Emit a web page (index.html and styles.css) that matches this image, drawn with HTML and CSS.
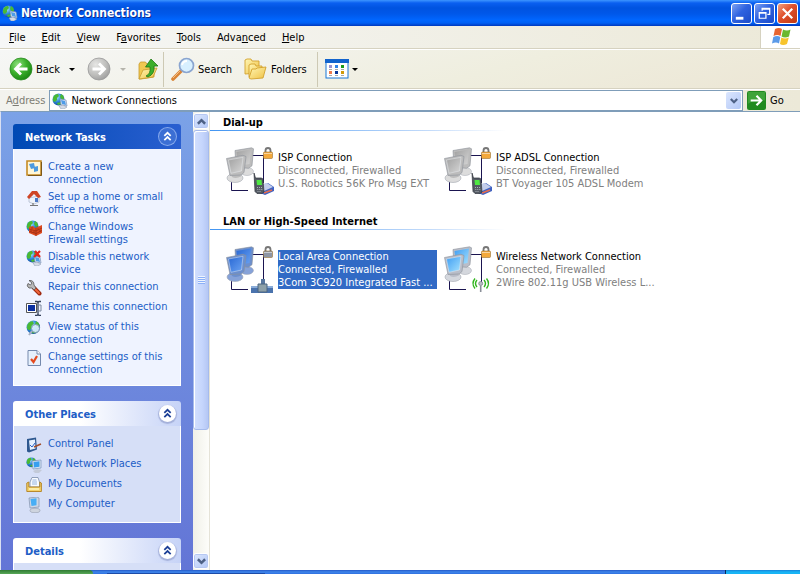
FILE: index.html
```html
<!DOCTYPE html>
<html lang="en">
<head>
<meta charset="utf-8">
<title>Network Connections</title>
<link rel="stylesheet" href="styles.css">
</head>
<body>
<svg class="defs" aria-hidden="true">
  <defs>
    <radialGradient id="globe" cx=".35" cy=".3" r=".8"><stop offset="0" stop-color="#a9e4ff"/><stop offset=".5" stop-color="#2b86d8"/><stop offset="1" stop-color="#0b3a8c"/></radialGradient>
    <radialGradient id="green" cx=".35" cy=".3" r=".8"><stop offset="0" stop-color="#8fe07e"/><stop offset=".5" stop-color="#3bb02c"/><stop offset="1" stop-color="#15800f"/></radialGradient>
    <radialGradient id="grey" cx=".35" cy=".3" r=".8"><stop offset="0" stop-color="#e6e6e4"/><stop offset=".6" stop-color="#bdbdbb"/><stop offset="1" stop-color="#999"/></radialGradient>
    <linearGradient id="folder" x2="1" y2="1"><stop offset="0" stop-color="#fff6b4"/><stop offset="1" stop-color="#efc143"/></linearGradient>
    <linearGradient id="scrOff" x2="1" y2="1"><stop offset="0" stop-color="#a0a0a0"/><stop offset="1" stop-color="#d6d6d6"/></linearGradient>
    <linearGradient id="scrOn" x2="1" y2="1"><stop offset="0" stop-color="#3f9df2"/><stop offset="1" stop-color="#a5e2ff"/></linearGradient>
    <linearGradient id="scrSel" x2="1" y2="1"><stop offset="0" stop-color="#2767d4"/><stop offset="1" stop-color="#6ba3f2"/></linearGradient>
    <symbol id="i-globe" viewBox="0 0 16 16">
      <circle cx="6.500" cy="6.500" r="6" fill="url(#globe)"/>
      <path d="M1 5Q2 1 6 1L7 3 5 5 5 7 3 9 1 8zM9 1Q12 2 12 6L10 7 8 4zM5 10l4-1 1 2-4 1z" fill="#49b934"/>
    </symbol>
    <symbol id="i-net" viewBox="0 0 16 16">
      <use href="#i-globe" width="16" height="16"/>
      <path d="M8 6l6 1 1 6-6-1z" fill="#dfe8f5" stroke="#7a92b8" stroke-width=".7"/>
      <path d="M9 7l4 1 1 4-4-1z" fill="#4e9be8"/>
      <path d="M7 13l4-1 4 2-3 2H9z" fill="#d5dbe6" stroke="#8391ab" stroke-width=".5"/>
    </symbol>
    <symbol id="i-lock" viewBox="0 0 10 12">
      <path d="M2.500 6V3.500a2.500 2.500 0 0 1 5 0V6" fill="none" stroke="#777" stroke-width="1.800"/>
      <rect x=".5" y="5" width="9" height="6.500" rx="1" fill="currentColor" stroke="#9a7434" stroke-width=".6"/>
      <path d="M1 6.500h8" stroke="#fff" stroke-opacity=".5"/>
    </symbol>
    <symbol id="i-wire" viewBox="0 0 48 48">
      <path d="M26 8.500H38.500M37.500 9V36M5.500 33V43.500H22" fill="none" stroke="#1a1450" stroke-width="1"/>
    </symbol>
    <symbol id="i-phone" viewBox="0 0 48 48">
      <path d="M29 40l13-4 6 4v4l-9 4-10-4z" fill="#3f62c2"/>
      <path d="M29 39l12-3 6 4-9 4z" fill="#c3cdea"/><path d="M38 46l8-3" stroke="#e86d4b" stroke-width="1.500"/>
      <path d="M28 26l1.500 5h5.500q2 0 2 2l1 12-2 1.500h-5l-2-2z" fill="#545a63" stroke="#2f343c" stroke-width=".7"/>
      <path d="M30.500 33h5l.5 5h-5z" fill="#4fe843"/><path d="M31 40.500h5M31.300 42.500h5M31.500 44.500h4" stroke="#aab0b8" stroke-dasharray="1 1"/>
    </symbol>
    <symbol id="i-chev" viewBox="0 0 16 16"><path d="M5 7.500L8 4.500l3 3M5 11.500l3-3 3 3" fill="none" stroke="currentColor" stroke-width="1.600"/></symbol>
    <symbol id="i-down" viewBox="0 0 8 8"><path d="M.8 2L4 5.200 7.200 2" fill="none" stroke="#4d6185" stroke-width="2.200"/></symbol>
    <symbol id="i-up" viewBox="0 0 8 8"><path d="M.8 6L4 2.800 7.200 6" fill="none" stroke="#4d6185" stroke-width="2.200"/></symbol>
    <symbol id="i-tri" viewBox="0 0 6 3"><path d="M0 0h6L3 3z" fill="currentColor"/></symbol>
    <symbol id="i-pcs" viewBox="0 0 48 48">
      <ellipse cx="21" cy="24.500" rx="6.500" ry="4" fill="var(--stand)" stroke="#a3a7b0" stroke-width=".5"/>
      <path d="M9 3.500L25.500 .8l2 1-1.500 17-3.500 2.500L10 20z" fill="var(--frame)" stroke="#8b9098" stroke-width=".6"/>
      <path d="M10.500 5L25 2.500 23.500 17 12 19z" fill="var(--screen)"/>
      <path d="M6 26h9l1 6H6z" fill="var(--frame)"/>
      <ellipse cx="9" cy="31" rx="8" ry="4.500" fill="var(--stand)" stroke="#a3a7b0" stroke-width=".6"/>
      <path d="M5 27.500l9-1 1 3q-5 2.500-9 .5z" fill="var(--frame)"/>
      <path d="M.5 11.500L17 8.300l3 1.200-2 16-3 2.500-11 .500z" fill="var(--frame)" stroke="#8b9098" stroke-width=".6"/>
      <path d="M2.500 13L17 10.300 15.500 24 5 26.300z" fill="var(--screen)" stroke="#eef2f7" stroke-opacity=".6" stroke-width=".7"/>
    </symbol>
  </defs>
</svg>

<header class="title-bar">
  <svg class="icon16"><use href="#i-net"/></svg>
  <h1>Network Connections</h1>
  <div class="window-buttons">
    <button aria-label="Minimize"><svg viewBox="0 0 20 20"><path d="M4 13.500h8v3H4z" fill="#fff"/></svg></button>
    <button aria-label="Restore"><svg viewBox="0 0 20 20"><path d="M7.500 7V4.500h8v6.500H13M7.500 5.500h8M4.500 9h7v6h-7zM4.500 9.500h7" fill="none" stroke="#fff" stroke-width="1.300"/></svg></button>
    <button class="close" aria-label="Close"><svg viewBox="0 0 20 20"><path d="M5 5l10 10M15 5L5 15" stroke="#fff" stroke-width="2.300"/></svg></button>
  </div>
</header>

<div class="menu-bar">
  <nav>
    <button><u>F</u>ile</button><button><u>E</u>dit</button><button><u>V</u>iew</button><button>F<u>a</u>vorites</button><button><u>T</u>ools</button><button>Adva<u>n</u>ced</button><button><u>H</u>elp</button>
  </nav>
  <div class="flag">
    <svg viewBox="0 0 20 19">
      <path d="M4 2q4-2 7 0L9.500 9q-3-2-7 0z" fill="#e8652f"/><path d="M12 2.500q4 2 7.500 0L18 9.500q-4 2-7.500 0z" fill="#6cb82e"/>
      <path d="M2.300 10q4-2 7 0L8 16.500q-3-2-7 0z" fill="#5b9ae8"/><path d="M10.300 10.500q4 2 7.500 0L16 17q-4 2-7 0z" fill="#f7c42c"/>
    </svg>
  </div>
</div>

<div class="tool-bar">
  <button class="tool back">
    <svg class="icon24" viewBox="0 0 24 24"><circle cx="12" cy="12" r="11" fill="url(#green)" stroke="#2b8c22" stroke-width=".8"/><path d="M18.500 12H7M12 6.500L6.500 12l5.500 5.500" fill="none" stroke="#fff" stroke-width="2.800"/></svg>
    <span>Back</span>
  </button>
  <button class="drop" aria-label="Back history"><svg><use href="#i-tri"/></svg></button>
  <button class="tool" aria-label="Forward"><svg class="icon24" viewBox="0 0 24 24"><circle cx="12" cy="12" r="11" fill="url(#grey)" stroke="#999" stroke-width=".8"/><path d="M5.500 12H17M12 6.500l5.500 5.500-5.500 5.500" fill="none" stroke="#fff" stroke-width="2.800"/></svg></button>
  <button class="drop off" aria-label="Forward history"><svg><use href="#i-tri"/></svg></button>
  <button class="tool up" aria-label="Up"><svg class="icon24" viewBox="0 0 24 24">
    <path d="M1 7l1.500-2h5L9 7l7-1v14L3 22H1z" fill="#f0c850" stroke="#c89a2c" stroke-width=".8"/>
    <path d="M1 22l4-9 14-2-4 9z" fill="url(#folder)" stroke="#c89a2c" stroke-width=".8"/>
    <path d="M8 19q5-2 4-9H7.500L13 2l7 7h-4q1 8-6 11z" fill="#3dae2b" stroke="#1f7a14" stroke-width=".8"/></svg></button>
  <span class="separator"></span>
  <button class="tool">
    <svg class="icon24" viewBox="0 0 24 24"><path d="M2 22l8-8" stroke="#d98436" stroke-width="3.600" stroke-linecap="round"/><path d="M2 21l7-7" stroke="#f3bf86" stroke-width="1"/><circle cx="15.500" cy="8.500" r="7" fill="#d8f0ff" stroke="#8aa5d0" stroke-width="1.700"/><path d="M11 8q1-4 5-4" fill="none" stroke="#fff" stroke-width="2"/></svg>
    <span>Search</span>
  </button>
  <button class="tool folders">
    <svg class="icon24" viewBox="0 0 24 24"><g fill="url(#folder)" stroke="#d2a22c" stroke-width=".9"><path d="M1 17V3l2-1h4l1 2h7v12z"/><path d="M5 20V8l2-1h4l1 2h6v9z"/><path d="M5 21l3-9h4l1-1 9-1-3 11-12 1z"/></g></svg>
    <span>Folders</span>
  </button>
  <span class="separator wide"></span>
  <button class="tool views" aria-label="Views">
    <svg class="icon24" viewBox="0 0 24 20"><rect x="1" y="1" width="22" height="18" fill="#fff" stroke="#1877d8"/><path d="M0 0h24v4H0z" fill="#1264cd"/><path d="M4 6h3v3H4z" fill="#9a91d0"/><path d="M10 6h3v3h-3z" fill="#3184e8"/><path d="M16 6h3v3h-3z" fill="#1a9b1a"/><path d="M4 12h3v3H4z" fill="#ec7a4b"/><path d="M10 12h3v3h-3z" fill="#083598"/><path d="M16 12h3v3h-3z" fill="#d19a09"/><path d="M4 10.500h3m3 0h3m3 0h3M4 16.500h3m3 0h3m3 0h3" stroke="#a8a8a8"/></svg>
    <svg class="tri"><use href="#i-tri"/></svg>
  </button>
</div>

<form class="address-bar">
  <label for="address">A<u>d</u>dress</label>
  <div class="combo">
    <svg class="icon16"><use href="#i-net"/></svg>
    <input id="address" type="text" value="Network Connections">
    <button type="button" aria-label="Show addresses"><svg><use href="#i-down"/></svg></button>
  </div>
  <button type="button" class="go">
    <svg viewBox="0 0 18 18"><rect width="18" height="18" rx="2" fill="#218a20"/><path d="M1 1h16v8Q9 7 1 12z" fill="#4cae43" opacity=".7"/><path d="M3.500 9H13M9 4.500L13.500 9 9 13.500" fill="none" stroke="#fff" stroke-width="2"/></svg>
    <span>Go</span>
  </button>
</form>

<div class="workspace">
  <aside class="sidebar">
    <section class="panel primary">
      <header><h2>Network Tasks</h2><button aria-label="Collapse Network Tasks"><svg><use href="#i-chev"/></svg></button></header>
      <ul>
        <li><svg class="icon16" viewBox="0 0 16 16"><path d="M1 1h14v14H1z" fill="#fff6d8" stroke="#c58b25" stroke-width="1.600"/><path d="M15.500 2v13.500H2" stroke="#7c5719" fill="none"/><path d="M3 4l5-1 1 5-4 1zM8 7l4-1v5l-4 1z" fill="#4c9ae0"/></svg><a href="#">Create a new connection</a></li>
        <li><svg class="icon16" viewBox="0 0 16 16"><path d="M3 8l10-2v6l-5 2-5-2z" fill="#f0f4fb" stroke="#9ca9bf" stroke-width=".6"/><path d="M1 7l5-6h5l4 6-3 1-4-4-5 5z" fill="#cf4526"/><path d="M9 8h3v4H9z" fill="#4b78c7"/><path d="M7 13v3M4 15.500h8" stroke="#777" stroke-width="1.200"/></svg><a href="#">Set up a home or small office network</a></li>
        <li><svg class="icon16" viewBox="0 0 16 16"><use href="#i-globe" width="16" height="16"/><path d="M3 7l4-1 2 2 7-3v8l-6 3-7-3z" fill="#dc4a20"/><path d="M3 9l7 2 6-3M3 11.500l7 2 6-3M6 7v2M5 10v2M8 11v2M12 8v2M14 10v2M10 8v8" stroke="#8c2510" stroke-width=".6" fill="none"/></svg><a href="#">Change Windows Firewall settings</a></li>
        <li><svg class="icon16" viewBox="0 0 16 16"><use href="#i-net" width="16" height="16"/><path d="M9 1l5 6M14 1L8 7" stroke="#e0261a" stroke-width="2.200"/></svg><a href="#">Disable this network device</a></li>
        <li><svg class="icon16" viewBox="0 0 16 16"><path d="M8 8l5.500 5.500" stroke="#a02a10" stroke-width="4" stroke-linecap="round"/><path d="M8 8l5 5" stroke="#f0663c" stroke-width="1.800" stroke-linecap="round"/><path d="M3 .5L6 3 4.500 5 2 3.500Q0 6 3 8l3 0 2 2 2-2-2-3Q8 0 3 .5z" fill="#b8b8b8" stroke="#555" stroke-width=".8"/></svg><a href="#">Repair this connection</a></li>
        <li><svg class="icon16" viewBox="0 0 16 16"><path d="M.5 3.500h10v9H.5z" fill="#fff" stroke="#555"/><path d="M2 5h7v6H2z" fill="#0a2fa0"/><path d="M9 1.500h2l1 1 1-1h2M12 2v12M9 15.500h2l1-1 1 1h2" stroke="#33405a" stroke-width="1.300" fill="none"/><path d="M12 5h3v6h-3" stroke="#7b879e" fill="none"/></svg><a href="#">Rename this connection</a></li>
        <li><svg class="icon16" viewBox="0 0 16 16"><use href="#i-globe" width="18" height="18"/><path d="M6 11l-3 4" stroke="#a5afc0" stroke-width="2"/><circle cx="9.500" cy="8.500" r="4" fill="#dff3ff" fill-opacity=".9" stroke="#8199b8"/></svg><a href="#">View status of this connection</a></li>
        <li><svg class="icon16" viewBox="0 0 16 16"><path d="M2 .5h9l3.500 3.500v11.500H2z" fill="#e6f0fd" stroke="#7489ad"/><path d="M11 .5V4h3.500" fill="#fff" stroke="#7489ad"/><path d="M5 9l2.500 3L11 6" fill="none" stroke="#e44b20" stroke-width="2.200"/></svg><a href="#">Change settings of this connection</a></li>
      </ul>
    </section>
    <section class="panel">
      <header><h2>Other Places</h2><button aria-label="Collapse Other Places"><svg><use href="#i-chev"/></svg></button></header>
      <ul>
        <li><svg class="icon16" viewBox="0 0 16 16"><path d="M1 2l9-1.500 1 12-8 3-2-1z" fill="#2f588f"/><path d="M3 3.500l6-1 .5 9L4 13z" fill="#e5f1ff"/><path d="M4 8l2 2 3-4" stroke="#2a63c8" fill="none"/><path d="M8 10l7-3" stroke="#a34d2a" stroke-width="1.500"/></svg><a href="#">Control Panel</a></li>
        <li><svg class="icon16" viewBox="0 0 16 16"><use href="#i-globe" width="13" height="13"/><path d="M6 4l9-1v8l-8 1z" fill="#dbe7f5" stroke="#7a92b8" stroke-width=".7"/><path d="M7.500 5l6-.7v5.500l-5.500.7z" fill="#38a0f0"/><path d="M7 14l4-2 5 1-3 3H9z" fill="#c3cad8"/></svg><a href="#">My Network Places</a></li>
        <li><svg class="icon16" viewBox="0 0 16 16"><path d="M4 5l2-4.500h6L13.500 5v5H4z" fill="#f8fbff" stroke="#7b8caa" stroke-width=".8"/><path d="M.8 6l2-1v5h11V5l1.600 1v8.500H.8z" fill="#f5d36b" stroke="#b28120" stroke-width=".9"/><path d="M3 12h10" stroke="#fff4b8" stroke-width="1.600"/><path d="M6.500 3h4M6 5h5M6 7h5" stroke="#7da5d8" stroke-width=".8"/></svg><a href="#">My Documents</a></li>
        <li><svg class="icon16" viewBox="0 0 16 16"><path d="M3 1l8-1 2 1v9l-9 1z" fill="#cdd7e6" stroke="#7f91ad" stroke-width=".7"/><path d="M4.500 2l6-.7v7L5.500 9z" fill="#47aef5"/><ellipse cx="9" cy="13.500" rx="5" ry="2.200" fill="#ced4de" stroke="#929aaa" stroke-width=".6"/></svg><a href="#">My Computer</a></li>
      </ul>
    </section>
    <section class="panel">
      <header><h2>Details</h2><button aria-label="Collapse Details"><svg><use href="#i-chev"/></svg></button></header>
      <ul></ul>
    </section>
  </aside>

  <div class="scrollbar">
    <button aria-label="Scroll up"><svg><use href="#i-up"/></svg></button>
    <div class="track"><div class="thumb"><i></i></div></div>
    <button aria-label="Scroll down"><svg><use href="#i-down"/></svg></button>
  </div>

  <main>
    <section class="group">
      <h2>Dial-up</h2>
      <div class="connections">
        <article class="connection off">
          <svg class="icon48" viewBox="0 0 48 48"><use href="#i-wire"/><use href="#i-pcs"/><use href="#i-lock" x="37" y="0" width="10" height="12"/><use href="#i-phone"/></svg>
          <div><h3>ISP Connection</h3><p>Disconnected, Firewalled</p><p>U.S. Robotics 56K Pro Msg EXT</p></div>
        </article>
        <article class="connection off">
          <svg class="icon48" viewBox="0 0 48 48"><use href="#i-wire"/><use href="#i-pcs"/><use href="#i-lock" x="37" y="0" width="10" height="12"/><use href="#i-phone"/></svg>
          <div><h3>ISP ADSL Connection</h3><p>Disconnected, Firewalled</p><p>BT Voyager 105 ADSL Modem</p></div>
        </article>
      </div>
    </section>
    <section class="group">
      <h2>LAN or High-Speed Internet</h2>
      <div class="connections">
        <article class="connection selected">
          <svg class="icon48" viewBox="0 0 48 48"><use href="#i-wire"/><use href="#i-pcs"/><use href="#i-lock" x="37" y="0" width="10" height="12"/><path d="M25 40h22v7H25z" fill="#4a73ad"/><path d="M25 41h22" stroke="#8badd9" stroke-width="2"/><path d="M35 33h4v5h-4z" fill="#57779f"/><path d="M32 38h9v8h-9z" fill="#8da0a8" stroke="#4b6580"/></svg>
          <div><h3>Local Area Connection</h3><p>Connected, Firewalled</p><p>3Com 3C920 Integrated Fast ...</p></div>
        </article>
        <article class="connection">
          <svg class="icon48" viewBox="0 0 48 48"><use href="#i-wire"/><use href="#i-pcs"/><use href="#i-lock" x="37" y="0" width="10" height="12"/><path d="M33 34q-3 3.500 0 7M31 32.500q-4 5 0 10M40 34q3 3.500 0 7M42.500 32.500q4 5 0 10" fill="none" stroke="#32b61f" stroke-width="1.400"/><circle cx="36.700" cy="37.500" r="2" fill="#b9bdc5" stroke="#777b83" stroke-width=".7"/><path d="M36.700 39.500V46" stroke="#8a8f98" stroke-width="1.600"/></svg>
          <div><h3>Wireless Network Connection</h3><p>Connected, Firewalled</p><p>2Wire 802.11g USB Wireless L...</p></div>
        </article>
      </div>
    </section>
  </main>
</div>

<footer class="task-bar"><span class="start"></span><span class="task"></span><span class="tray"></span></footer>
</body>
</html>
```
FILE: styles.css
```css
* { box-sizing: border-box; }
html, body { height: 100%; margin: 0; }
body {
  display: flex;
  flex-direction: column;
  overflow: hidden;
  background: #fff;
  color: #000;
  font: 11px/13px "DejaVu Sans Condensed", Tahoma, sans-serif;
}
h1, h2, h3, p, ul { margin: 0; padding: 0; font: inherit; }
ul { list-style: none; }
button, input { margin: 0; padding: 0; border: 0; background: none; color: inherit; font: inherit; }
svg { display: block; flex: none; }
.defs { position: absolute; width: 0; height: 0; }
.icon16 { width: 16px; height: 16px; }
.icon24 { width: 24px; height: 24px; }
.icon48 { width: 48px; height: 48px; }

.title-bar {
  display: flex;
  align-items: center;
  gap: 3px;
  height: 26px;
  flex: none;
  padding: 0 2px;
  background: linear-gradient(#3d95ff 0, #0a5ff0 3px, #0053e0 8px, #0058ea 14px, #0066ff 20px, #0060f4 23px, #0038bd 26px);
  color: #fff;
}
.title-bar h1 { flex: 1; font-size: 12px; font-weight: bold; text-shadow: 1px 1px #0b2b8f; }
.window-buttons { display: flex; gap: 2px; }
.window-buttons button {
  width: 21px;
  height: 21px;
  border: 1px solid #fff;
  border-radius: 3px;
  background: linear-gradient(135deg, #7ea2f2, #2f63e0 45%, #1c4bc8);
}
.window-buttons .close { background: linear-gradient(135deg, #f0a080, #df4f2b 45%, #c03a14); }
.window-buttons svg { width: 19px; height: 19px; }

.menu-bar {
  display: flex;
  height: 23px;
  flex: none;
  border-bottom: 1px solid #d6d2c0;
  background: linear-gradient(90deg, #f6f7f7, #ece9d8);
}
.menu-bar nav { display: flex; flex: 1; gap: 16px; padding: 0 9px; }
.flag { width: 40px; padding: 1px 10px; border-left: 1px solid #d6d2c0; background: #fff; }
.flag svg { width: 20px; height: 19px; }

.tool-bar {
  display: flex;
  align-items: center;
  height: 40px;
  flex: none;
  padding: 0 9px;
  border-top: 1px solid #fff;
  border-bottom: 1px solid #d6d2c0;
  background: linear-gradient(165deg, #f6f7f6, #efeedf 60%, #ece6d5);
}
.tool { display: flex; align-items: center; gap: 3px; }
.drop { width: 27px; padding: 0 9px; }
.drop svg, .tri { width: 6px; height: 3px; }
.off.drop { color: #b5b4ac; }
.separator { width: 1px; height: 35px; margin: 0 7px 0 1px; background: #cdc9b4; }
.separator.wide { margin-left: 10px; }
.folders { margin-left: 12px; }
.views .icon24 { height: 20px; }

.address-bar {
  display: flex;
  align-items: center;
  height: 22px;
  flex: none;
  gap: 4px;
  padding: 0 6px;
  border-top: 1px solid #fff;
  background: linear-gradient(90deg, #f3f3ee, #ece9d8);
}
.address-bar label { color: #7d7c73; }
.combo {
  display: flex;
  align-items: center;
  gap: 3px;
  flex: 1;
  height: 21px;
  padding: 0 1px 0 2px;
  border: 1px solid #7f9db9;
  background: #fff;
}
.combo input { flex: 1; min-width: 0; outline: 0; }
.combo button {
  display: grid;
  place-items: center;
  width: 15px;
  height: 17px;
  border-radius: 2px;
  background: linear-gradient(135deg, #dbe6fe, #b3c8f6);
}
.combo button svg { width: 8px; height: 8px; }
.go { display: flex; align-items: center; gap: 4px; width: 47px; }
.go svg { width: 19px; height: 19px; }

.workspace {
  display: flex;
  flex: 1;
  min-height: 0;
  border-top: 1px solid #7f9db9;
  border-left: 1px solid #d9e0f2;
}
.sidebar {
  display: flex;
  flex-direction: column;
  gap: 15px;
  width: 192px;
  flex: none;
  padding: 12px;
  overflow: hidden;
  background: linear-gradient(#7ba2e7, #6375d6);
}
.panel { flex: none; color: #215dc6; }
.panel header {
  display: flex;
  align-items: center;
  justify-content: space-between;
  height: 25px;
  padding: 0 5px 0 12px;
  border-radius: 3px 3px 0 0;
  background: linear-gradient(90deg, #fff 40%, #c6d3f7);
}
.panel h2 { padding-top: 2px; font-weight: bold; }
.panel header button { width: 17px; height: 17px; border-radius: 50%; background: #fff; box-shadow: 0 1px 1px 1px #a5b1da; color: #1c3f96; }
.panel header svg { width: 17px; height: 17px; }
.panel ul {
  display: grid;
  gap: 4px;
  padding: 11px 10px 9px 12px;
  border: 1px solid #fff;
  border-top: 0;
  background: #d6dff7;
}
.panel li { display: flex; gap: 6px; min-height: 16px; }
.panel li .icon16 { height: 16px; margin-bottom: -3px; }
.panel a { color: inherit; text-decoration: none; }
.primary header { background: linear-gradient(90deg, #0049b4, #2a5fd0); color: #fff; }
.primary header button { background: #3c6fd4; box-shadow: 0 0 0 1px #86a9ec; color: #fff; }
.primary ul { background: #eff3ff; }

.scrollbar {
  display: flex;
  flex-direction: column;
  width: 17px;
  flex: none;
  padding: 1px 0;
  border-right: 1px solid #e5e3d8;
  background: linear-gradient(90deg, #f0f0e8, #fdfdfa);
}
.scrollbar button {
  display: grid;
  place-items: center;
  width: 16px;
  height: 16px;
  border: 1px solid #fff;
  border-radius: 3px;
  background: linear-gradient(135deg, #dbe6fe, #b3c8f6);
  box-shadow: inset 0 0 0 1px #b6c8f3;
}
.scrollbar button svg { width: 9px; height: 9px; }
.track { flex: 1; padding-top: 1px; }
.thumb {
  display: grid;
  place-items: center;
  height: 71%;
  border: 1px solid #a6bbec;
  border-radius: 3px;
  background: linear-gradient(90deg, #d3e0fe, #c5d5fc 60%, #b5c7f4);
  box-shadow: inset 1px 1px #fff;
}
.thumb i { width: 7px; height: 8px; background: repeating-linear-gradient(#eef4fe 0 1px, #8cb0f8 1px 2px); }

main { flex: 1; min-width: 0; background: #fff; }
.group { padding-bottom: 16px; }
.group h2 {
  padding: 4px 13px 1px;
  border-bottom: 1px solid;
  border-image: linear-gradient(90deg, #4295f2, #c3dbfa 220px, #fff 296px) 1;
  font-weight: bold;
}
.connections { display: grid; grid-template-columns: repeat(auto-fill, 211px); gap: 7px; padding: 16px 16px 0; }
.connection {
  --screen: url(#scrOn);
  --frame: #b9bdc8;
  --stand: #d4d7dd;
  display: flex;
  gap: 4px;
  color: #808080;
}
.connection.off { --screen: url(#scrOff); --frame: #bcbcbc; --stand: #dcdcdc; }
.connection.selected { --screen: url(#scrSel); --frame: #6c8fcd; --stand: #86a2d8; }
.connection div { flex: 1; min-width: 0; align-self: flex-start; margin-top: 4px; white-space: nowrap; }
.connection h3 { color: #000; }
.connection.selected div { background: #316ac5; }
.connection.selected div * { color: #fff; }
.icon48 { color: #f3a93c; }
.selected .icon48 { color: #8e96a4; }

.task-bar { display: flex; height: 4px; flex: none; background: linear-gradient(#2358c8, #3f86ea 2px, #2f6fdf); }
.start { width: 93px; margin-right: 14px; border-radius: 0 4px 0 0; background: linear-gradient(#2f7a33, #58a858); }
.task { width: 158px; border-top: 3px solid transparent; background: #1c4ba8; background-clip: padding-box; }
.tray { width: 75px; margin-left: auto; border-left: 1px solid #0b2b5c; background: linear-gradient(#1680d8, #17b4f5 2px); }
```
